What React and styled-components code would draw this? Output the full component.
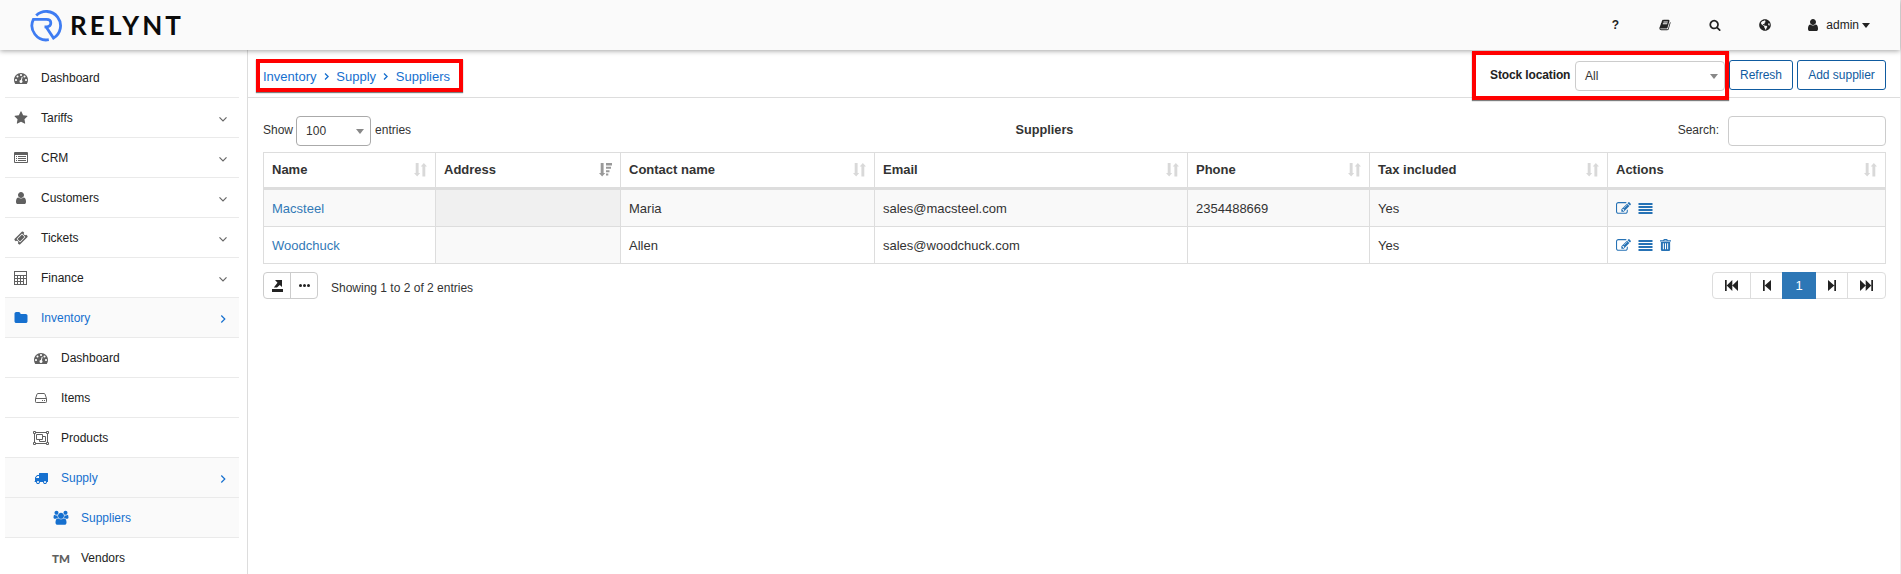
import React from "react";
import styled, { createGlobalStyle } from "styled-components";
import { FaGlobeAmericas } from "react-icons/fa";

const GlobalStyle = createGlobalStyle`
  * { box-sizing: border-box; }
  body {
    margin: 0;
    background: #fff;
    color: #333;
    font: 12px/17px "Liberation Sans", Arial, sans-serif;
    overflow: hidden;
  }
`;

const BLUE = "#1670cf";

const paths = {
  gauge: "M384 1152q0-53-37.5-90.5t-90.5-37.5-90.5 37.5-37.5 90.5 37.5 90.5 90.5 37.5 90.5-37.5 37.5-90.5zm192-448q0-53-37.5-90.5t-90.5-37.5-90.5 37.5-37.5 90.5 37.5 90.5 90.5 37.5 90.5-37.5 37.5-90.5zm428 481l101-382q6-26-7.5-48.5t-38.5-29.5-48 6.5-30 39.5l-101 382q-60 5-107 43.5t-63 98.5q-20 77 20 146t117 89 146-20 89-117q16-60-6-117t-72-91zm660-33q0-53-37.5-90.5t-90.5-37.5-90.5 37.5-37.5 90.5 37.5 90.5 90.5 37.5 90.5-37.5 37.5-90.5zm-640-640q0-53-37.5-90.5t-90.5-37.5-90.5 37.5-37.5 90.5 37.5 90.5 90.5 37.5 90.5-37.5 37.5-90.5zm448 192q0-53-37.5-90.5t-90.5-37.5-90.5 37.5-37.5 90.5 37.5 90.5 90.5 37.5 90.5-37.5 37.5-90.5zm320 448q0 261-141 483-19 29-54 29h-1402q-35 0-54-29-141-221-141-483 0-182 71-348t191-286 286-191 348-71 348 71 286 191 191 286 71 348z",
  star: "M1728 647q0 22-26 48l-363 354 86 500q1 7 1 20 0 21-10.5 35.5t-30.5 14.5q-19 0-40-12l-449-236-449 236q-22 12-40 12-21 0-31.5-14.5t-10.5-35.5q0-6 2-20l86-500-364-354q-25-27-25-48 0-37 56-46l502-73 225-455q19-41 49-41t49 41l225 455 502 73q56 9 56 46z",
  user: "M1536 1399q0 109-62.5 187t-150.5 78h-854q-88 0-150.5-78t-62.5-187q0-85 8.5-160.5t31.5-152 58.5-131 94-89 134.5-34.5q131 128 313 128t313-128q76 0 134.5 34.5t94 89 58.5 131 31.5 152 8.5 160.5zm-256-887q0 159-112.5 271.5t-271.5 112.5-271.5-112.5-112.5-271.5 112.5-271.5 271.5-112.5 271.5 112.5 112.5 271.5z",
  ticket: "M1024 452l316 316-572 572-316-316zm-211 979l618-618q19-19 19-45t-19-45l-362-362q-18-18-45-18t-45 18l-618 618q-19 19-19 45t19 45l362 362q18 18 45 18t45-18zm889-637l-907 908q-37 37-90.5 37t-90.5-37l-126-126q56-56 56-136t-56-136-136-56-136 56l-125-126q-37-37-37-90.5t37-90.5l907-906q37-37 90.5-37t90.5 37l125 125q-56 56-56 136t56 136 136 56 136-56l126 125q37 37 37 90.5t-37 90.5z",
  folder: "M1728 608v704q0 92-66 158t-158 66h-1216q-92 0-158-66t-66-158v-960q0-92 66-158t158-66h320q92 0 158 66t66 158v32h672q92 0 158 66t66 158z",
  truck: "M640 1408q0-52-38-90t-90-38-90 38-38 90 38 90 90 38 90-38 38-90zm-384-512h384v-256h-158q-13 0-22 9l-195 195q-9 9-9 22v30zm1280 512q0-52-38-90t-90-38-90 38-38 90 38 90 90 38 90-38 38-90zm256-1088v1024q0 15-4 26.5t-13.5 18.5-16.5 11.5-23.5 6-22.5 2-25.5 0-22.5-.5q0 106-75 181t-181 75-181-75-75-181h-384q0 106-75 181t-181 75-181-75-75-181h-64q-3 0-22.5.5t-25.5 0-22.5-2-23.5-6-16.5-11.5-13.5-18.5-4-26.5q0-26 19-45t45-19v-320q0-8-.5-35t0-38 2.5-34.5 6.5-37 14-30.5 22.5-30l198-198q19-19 50.5-32t58.5-13h160v-192q0-26 19-45t45-19h1024q26 0 45 19t19 45z",
  users: "M657 896q-162 5-265 128h-134q-82 0-138-40.5t-56-118.5q0-353 124-353 6 0 43.5 21t97.5 42.5 119 21.5q67 0 133-23-5 37-5 66 0 139 81 256zm1071 637q0 120-73 189.5t-194 69.5h-874q-121 0-194-69.5t-73-189.5q0-53 3.5-103.5t14-109 26.5-108.5 43-97.5 62-81 85.5-53.5 111.5-20q10 0 43 21.5t73 48 107 48 135 21.5 135-21.5 107-48 73-48 43-21.5q61 0 111.5 20t85.5 53.5 62 81 43 97.5 26.5 108.5 14 109 3.5 103.5zm-1024-1277q0 106-75 181t-181 75-181-75-75-181 75-181 181-75 181 75 75 181zm704 384q0 159-112.5 271.5t-271.5 112.5-271.5-112.5-112.5-271.5 112.5-271.5 271.5-112.5 271.5 112.5 112.5 271.5zm576 225q0 78-56 118.5t-138 40.5h-134q-103-123-265-128 81-117 81-256 0-29-5-66 66 23 133 23 59 0 119-21.5t97.5-42.5 43.5-21q124 0 124 353zm-128-609q0 106-75 181t-181 75-181-75-75-181 75-181 181-75 181 75 75 181z",
  search: "M1216 832q0-185-131.5-316.5t-316.5-131.5-316.5 131.5-131.5 316.5 131.5 316.5 316.5 131.5 316.5-131.5 131.5-316.5zm512 832q0 52-38 90t-90 38q-54 0-90-38l-343-342q-179 124-399 124-143 0-273.5-55.5t-225-150-150-225-55.5-273.5 55.5-273.5 150-225 225-150 273.5-55.5 273.5 55.5 225 150 150 225 55.5 273.5q0 220-124 399l343 343q37 37 37 90z",
  book: "M1703 478q40 57 18 129l-275 906q-19 64-76.5 107.5t-122.5 43.5h-923q-77 0-148.5-53.5t-99.5-131.5q-24-67-2-127 0-4 3-27t4-37q1-8-3-21.5t-3-19.5q2-11 8-21t16.5-23.5 16.5-23.5q23-38 45-91.5t30-91.5q3-10 .5-30t-.5-28q3-11 17-28t17-23q21-36 42-92t25-90q1-9-2.5-32t.5-28q4-13 22-30.5t22-22.5q19-26 42.5-84.5t27.5-96.5q1-8-3-25.5t-2-26.5q2-8 9-18t18-23 17-21q8-12 16.5-30.5t15-35 16-36 19.5-32 26.5-23.5 36-11.5 47.5 5.5l-1 3q38-9 51-9h761q74 0 114 56t18 130l-274 906q-36 119-71.5 153.5t-128.5 34.5h-869q-27 0-38 15-11 16-1 43 24 70 144 70h923q29 0 56-15.5t35-41.5l300-987q7-22 5-57 38 15 59 43zm-1064 2q-4 13 2 22.5t20 9.5h608q13 0 25.5-9.5t16.5-22.5l21-64q4-13-2-22.5t-20-9.5h-608q-13 0-25.5 9.5t-16.5 22.5zm-83 256q-4 13 2 22.5t20 9.5h608q13 0 25.5-9.5t16.5-22.5l21-64q4-13-2-22.5t-20-9.5h-608q-13 0-25.5 9.5t-16.5 22.5z",
  edit: "M888 1184l116-116-152-152-116 116v56h96v96h56zm440-720q-16-16-33 1l-350 350q-17 17-1 33t33-1l350-350q17-17 1-33zm80 594v190q0 119-84.5 203.5t-203.5 84.5h-832q-119 0-203.5-84.5t-84.5-203.5v-832q0-119 84.5-203.5t203.5-84.5h832q63 0 117 25 15 7 18 23 3 17-9 29l-49 49q-14 14-32 8-23-6-45-6h-832q-66 0-113 47t-47 113v832q0 66 47 113t113 47h832q66 0 113-47t47-113v-126q0-13 9-22l64-64q15-15 35-7t20 29zm-96-738l288 288-672 672h-288v-288zm444 132l-92 92-288-288 92-92q28-28 68-28t68 28l152 152q28 28 28 68t-28 68z",
};

const Glyph = ({ name, size = 14, box = "0 0 1792 1792" }) => (
  <svg width={size} height={size} viewBox={box} fill="currentColor">
    <path d={paths[name]} />
  </svg>
);

const ListAltIcon = () => (
  <svg width="14" height="12" viewBox="0 0 14 12" fill="currentColor">
    <path fillRule="evenodd" d="M1 0h12a1 1 0 0 1 1 1v9a1 1 0 0 1-1 1H1a1 1 0 0 1-1-1V1a1 1 0 0 1 1-1zM1 3v7h12V3z" />
    <path d="M2 4h1v1H2zM4 4h8v1H4zM2 6h1v1H2zM4 6h8v1H4zM2 8h1v1H2zM4 8h8v1H4z" />
  </svg>
);
const CalculatorIcon = () => (
  <svg width="14" height="14" viewBox="0 0 14 14" fill="currentColor">
    <path fillRule="evenodd" d="M0 0h13v14H0zM1 1v3h11V1zM1 5v2h2V5zM4 5v2h2V5zM7 5v2h2V5zM10 5v2h2V5zM1 8v2h2V8zM4 8v2h2V8zM7 8v2h2V8zM10 8v5h2V8zM1 11v2h2v-2zM4 11v2h2v-2zM7 11v2h2v-2z" />
  </svg>
);
const DriveIcon = () => (
  <svg width="12" height="10" viewBox="0 0 12 10" fill="none" stroke="currentColor">
    <path d="M.5 5.500L2 1.200Q2.200 .5 3 .5h6q.8 0 1 .7l1.500 4.300v3.200q0 .8-.8.8H1.300q-.8 0-.8-.8zM.5 5.500h11M7 7.500h1M9 7.500h1" />
  </svg>
);
const GroupIcon = () => (
  <svg width="16" height="14" viewBox="0 0 16 14" fill="none" stroke="currentColor">
    <path d="M2 1.500h12M2 12.500h12M1.500 2v10M14.500 2v10" />
    <path d="M.5.5h2v2h-2zM13.500.5h2v2h-2zM.5 11.500h2v2h-2zM13.500 11.500h2v2h-2z" fill="#fff" />
    <path d="M3.500 3.500h6v5h-6zM9.500 5.500h3v5h-6v-2" />
  </svg>
);
const TrashIcon = () => (
  <svg width="11" height="12" viewBox="0 0 10 12" fill="currentColor" preserveAspectRatio="none">
    <path fillRule="evenodd" d="M3 1.200Q3 0 4 0h2q1 0 1 1.200h3v1.300H0V1.200zM4 .9v.5h2V.9zM.8 3h8.400v7.800Q9.200 12 8 12H2Q.8 12 .8 10.800zM2.600 4.300v5.900h.9V4.300zM4.550 4.300v5.900h.9V4.300zM6.500 4.300v5.900h.9V4.300z" />
  </svg>
);
const LinesIcon = () => (
  <svg width="15" height="11" viewBox="0 0 15 11" fill="currentColor">
    <path d="M.5 0h14v2H.5zM.5 3h14v2H.5zM.5 6h14v2H.5zM.5 9h14v2H.5z" />
  </svg>
);
const Angle = ({ right, size = 8, weight = 1.2 }) => (
  <svg width={size} height={size} viewBox="0 0 8 8" fill="none" stroke="currentColor" strokeWidth={weight}>
    <path d={right ? "M2.300 .5L5.800 4 2.300 7.500" : "M.5 2.300L4 5.800 7.500 2.300"} />
  </svg>
);
const SortIcon = ({ active }) => (
  <svg width="13" height="14" viewBox="0 0 13 14" fill="currentColor">
    <path d="M1.700 0h2.900v10H6.200L3.150 13.500 0 10h1.700z" />
    {active ? (
      <path d="M7 0h6v2.500H7zM7 3.800h5v2H7zM7 7.200h3.500v2H7zM7 10.600h2.300v2H7z" />
    ) : (
      <path d="M8.400 13.500h2.900V3.500H13L9.850 0 6.700 3.500h1.700z" />
    )}
  </svg>
);
const StepIcon = ({ double, forward }) => (
  <svg width={double ? 13 : 8} height="11" viewBox={double ? "0 0 13 11" : "0 0 8 11"} fill="currentColor">
    <g transform={forward ? `translate(${double ? 13 : 8} 0) scale(-1 1)` : undefined}>
      <path d={double ? "M0 0h1.700v11H0zM7.300 0v11L1.700 5.500zM13 0v11L7.300 5.500z" : "M0 0h1.700v11H0zM8 0v11L1.700 5.500z"} />
    </g>
  </svg>
);
const ExportIcon = () => (
  <svg width="11" height="12" viewBox="0 0 11 12" fill="currentColor">
    <path d="M0 9h11v3H0zM3 0h7v7L7.800 5 5 7.600H1.800L5.500 2.700z" />
  </svg>
);
const LogoMark = () => (
  <svg width="33" height="33" viewBox="0 0 33 33" fill="none" stroke="#3e7cf2" strokeWidth="2.800">
    <path d="M6.200 6.600A14.300 14.300 0 1 1 23.500 29.100L16.200 18" />
    <path d="M18.800 30.700A14.300 14.300 0 0 1 3.400 10.400H16.500Q20.800 10.400 20.800 14T16.500 17.800H14.500" />
  </svg>
);

const Page = styled.div`
  width: 1901px;
  height: 574px;
  border-right: 1px solid #eee;
  display: flex;
  flex-direction: column;
`;
const Header = styled.header`
  position: relative;
  z-index: 1;
  flex: none;
  height: 50px;
  padding: 0 30px;
  display: flex;
  align-items: center;
  justify-content: space-between;
  background: #fafafa;
  box-shadow: 0 1px 5px rgba(0, 0, 0, 0.36);
  color: #222;
`;
const Brand = styled.div`
  display: flex;
  align-items: center;
  gap: 7px;
  color: #0b0b0b;
  font: 700 26px/30px Lato, sans-serif;
  letter-spacing: 3.150px;
`;
const HeaderTools = styled.nav`
  display: flex;
  align-items: center;
`;
const Tool = styled.span`
  width: 50px;
  height: 20px;
  display: flex;
  align-items: center;
  justify-content: center;
  font-weight: bold;
`;
const Account = styled.div`
  display: flex;
  align-items: center;
  margin-left: 16px;
`;
const AccountName = styled.span`
  margin: 0 3px 0 6px;
`;
const Caret = styled.i`
  border: solid transparent;
  border-width: ${(p) => (p.$small ? "5px 4px 0" : "5px 4.5px 0")};
  border-top-color: ${(p) => (p.$small ? "#888" : "currentColor")};
`;

const Body = styled.div`
  flex: 1;
  min-height: 0;
  display: flex;
`;
const Sidebar = styled.aside`
  flex: none;
  width: 248px;
  padding: 8px 8px 0 5px;
  border-right: 1px solid #ddd;
  overflow: hidden;
`;
const MenuItem = styled.div`
  height: 40px;
  padding: 0 12px 0 ${(p) => 6 + p.$level * 20}px;
  display: flex;
  align-items: center;
  border-bottom: 1px solid #eaeaea;
  background: ${(p) => (p.$active ? "#fafafa" : "#fff")};
  color: ${(p) => (p.$active ? BLUE : "#222")};
`;
const MenuIcon = styled.span`
  width: 20px;
  height: 18px;
  margin: 1px 10px 0 0;
  display: flex;
  align-items: center;
  justify-content: center;
  color: ${(p) => (p.$active ? BLUE : "#606060")};
`;
const MenuLabel = styled.span`
  flex: 1;
  padding-top: 2px;
`;
const MenuArrow = styled.span`
  display: flex;
  margin-top: 2px;
  color: ${(p) => (p.$active ? BLUE : "#666")};
`;
const Trademark = styled.span`
  padding-top: 1px;
  font: 900 11.500px/12px Lato, sans-serif;
`;

const Main = styled.main`
  flex: 1;
  min-width: 0;
`;
const TitleBar = styled.div`
  height: 48px;
  padding: 0 14px 0 8px;
  display: flex;
  align-items: flex-start;
  justify-content: space-between;
  border-bottom: 1px solid #ddd;
`;
const Highlight = styled.div`
  border: 4px solid #f00;
  box-shadow: 0 1px 1px rgba(0, 0, 0, 0.5);
  display: flex;
  align-items: center;
`;
const Breadcrumbs = styled(Highlight)`
  width: 207px;
  height: 33px;
  margin-top: 9px;
  padding: 1px 0 0 3px;
  gap: 6.400px;
  font-size: 13px;
  color: ${BLUE};
`;
const StockFilter = styled(Highlight)`
  position: relative;
  z-index: 2;
  width: 257px;
  height: 49px;
  margin-top: 1px;
  padding-left: 14px;
`;
const StockLabel = styled.b`
  width: 85px;
  white-space: nowrap;
  letter-spacing: -0.12px;
  color: #222;
`;
const TitleActions = styled.div`
  display: flex;
`;
const Buttons = styled.div`
  display: flex;
  gap: 4px;
  padding-top: 10px;
`;
const Button = styled.button`
  width: ${(p) => p.$width}px;
  height: 30px;
  padding: 0;
  border: 1px solid #0f5ba0;
  border-radius: 3px;
  background: #fff;
  color: #0f5ba0;
  font: inherit;
`;
const Select = styled.div`
  width: ${(p) => p.$width}px;
  height: 30px;
  padding: 1px ${(p) => p.$right}px 0 9px;
  display: flex;
  align-items: center;
  justify-content: space-between;
  border: 1px solid ${(p) => (p.$dark ? "#aaa" : "#ccc")};
  border-radius: 4px;
  background: #fff;
`;

const Content = styled.section`
  padding: 18px 14px 0 15px;
`;
const Controls = styled.div`
  height: 30px;
  display: grid;
  grid-template-columns: 1fr auto 1fr;
  margin-bottom: 6px;
`;
const Length = styled.div`
  display: flex;
  gap: 3px;
  line-height: 29px;
`;
const Entries = styled.span`
  padding-left: 1px;
`;
const Caption = styled.b`
  color: #333;
  font-size: 12.700px;
  line-height: 29px;
  padding-right: 60px;
`;
const Search = styled.label`
  display: flex;
  justify-content: flex-end;
  gap: 9px;
  line-height: 29px;
`;
const SearchInput = styled.input`
  width: 158px;
  height: 30px;
  border: 1px solid #ccc;
  border-radius: 4px;
`;

const Table = styled.div`
  border: solid #ddd;
  border-width: 1px 0 0 1px;
  font-size: 13px;
`;
const Row = styled.div`
  display: grid;
  grid-template-columns: 172px 185px 254px 313px 182px 238px 278px;
  height: 37px;
  border-bottom: ${(p) => (p.$head ? 3 : 1)}px solid #ddd;
  background: ${(p) => (p.$odd ? "#f9f9f9" : "#fff")};
`;
const Cell = styled.div`
  padding: 0 8px;
  display: flex;
  align-items: center;
  border-right: 1px solid #ddd;
  background: ${(p) => (p.$sorted ? (p.$odd ? "#f0f0f0" : "#f9f9f9") : "transparent")};
`;
const HeadCell = styled(Cell)`
  justify-content: space-between;
  padding-bottom: 2px;
  font-weight: bold;
`;
const SortMark = styled.span`
  display: flex;
  padding-top: 2px;
  color: ${(p) => (p.$active ? "#999" : "#d9d9d9")};
`;
const Link = styled.span`
  color: #337ab7;
`;
const RowActions = styled.div`
  display: flex;
  align-items: center;
  gap: 7px;
  color: #2672b5;
`;

const Footer = styled.div`
  margin-top: 8px;
  display: flex;
`;
const Group = styled.div`
  display: flex;
  height: 27px;
  border: 1px solid ${(p) => (p.$light ? "#ddd" : "#ccc")};
  border-radius: 4px;
`;
const GroupButton = styled.div`
  width: ${(p) => p.$width}px;
  display: flex;
  align-items: center;
  justify-content: center;
  border-left: ${(p) => (p.$line ? `1px solid ${p.$line}` : 0)};
  color: #222;
`;
const CurrentPage = styled.div`
  width: 34px;
  margin: -1px 0;
  display: flex;
  align-items: center;
  justify-content: center;
  background: #2d77b6;
  color: #fff;
  font-size: 13px;
`;
const Info = styled.span`
  flex: 1;
  padding: 8px 0 0 13px;
`;
const Dots = styled.span`
  display: flex;
  gap: 1px;
  i { width: 3px; height: 3px; border-radius: 1.500px; background: #222; }
`;

const menu = [
  ["Dashboard", 0, <Glyph name="gauge" />],
  ["Tariffs", 0, <Glyph name="star" />, "down"],
  ["CRM", 0, <ListAltIcon />, "down"],
  ["Customers", 0, <Glyph name="user" />, "down"],
  ["Tickets", 0, <Glyph name="ticket" />, "down"],
  ["Finance", 0, <CalculatorIcon />, "down"],
  ["Inventory", 0, <Glyph name="folder" />, "right", true],
  ["Dashboard", 1, <Glyph name="gauge" />],
  ["Items", 1, <DriveIcon />],
  ["Products", 1, <GroupIcon />],
  ["Supply", 1, <Glyph name="truck" />, "right", true],
  ["Suppliers", 2, <Glyph name="users" size={16} box="0 -100 2048 2048" />, null, true],
  ["Vendors", 2, <Trademark>TM</Trademark>],
];
const columns = ["Name", "Address", "Contact name", "Email", "Phone", "Tax included", "Actions"];
const suppliers = [
  { name: "Macsteel", contact: "Maria", email: "sales@macsteel.com", phone: "2354488669", tax: "Yes" },
  { name: "Woodchuck", contact: "Allen", email: "sales@woodchuck.com", phone: "", tax: "Yes", removable: true },
];

export default function App() {
  return (
    <Page>
      <GlobalStyle />
      <Header>
        <Brand><LogoMark />RELYNT</Brand>
        <HeaderTools>
          <Tool>?</Tool>
          <Tool><Glyph name="book" size={12} /></Tool>
          <Tool><Glyph name="search" size={12} /></Tool>
          <Tool><FaGlobeAmericas size={12} /></Tool>
          <Account>
            <Glyph name="user" />
            <AccountName>admin</AccountName>
            <Caret />
          </Account>
        </HeaderTools>
      </Header>
      <Body>
        <Sidebar>
          {menu.map(([label, level, icon, arrow, active], i) => (
            <MenuItem key={i} $level={level} $active={active}>
              <MenuIcon $active={active}>{icon}</MenuIcon>
              <MenuLabel>{label}</MenuLabel>
              {arrow && <MenuArrow $active={active}><Angle right={arrow === "right"} /></MenuArrow>}
            </MenuItem>
          ))}
        </Sidebar>
        <Main>
          <TitleBar>
            <Breadcrumbs>
              <span>Inventory</span>
              <Angle right size={7} weight={1.5} />
              <span>Supply</span>
              <Angle right size={7} weight={1.5} />
              <span>Suppliers</span>
            </Breadcrumbs>
            <TitleActions>
              <StockFilter>
                <StockLabel>Stock location</StockLabel>
                <Select $width={150} $right={6}>All<Caret $small /></Select>
              </StockFilter>
              <Buttons>
                <Button $width={64}>Refresh</Button>
                <Button $width={89}>Add supplier</Button>
              </Buttons>
            </TitleActions>
          </TitleBar>
          <Content>
            <Controls>
              <Length>
                Show
                <Select $width={75} $right={6} $dark>100<Caret $small /></Select>
                <Entries>entries</Entries>
              </Length>
              <Caption>Suppliers</Caption>
              <Search>Search:<SearchInput /></Search>
            </Controls>
            <Table>
              <Row $head>
                {columns.map((title, i) => (
                  <HeadCell key={title}>
                    {title}
                    <SortMark $active={i === 1}><SortIcon active={i === 1} /></SortMark>
                  </HeadCell>
                ))}
              </Row>
              {suppliers.map((s, i) => (
                <Row key={s.name} $odd={i === 0}>
                  <Cell><Link>{s.name}</Link></Cell>
                  <Cell $sorted $odd={i === 0} />
                  <Cell>{s.contact}</Cell>
                  <Cell>{s.email}</Cell>
                  <Cell>{s.phone}</Cell>
                  <Cell>{s.tax}</Cell>
                  <Cell>
                    <RowActions>
                      <Glyph name="edit" size={15} />
                      <LinesIcon />
                      {s.removable && <TrashIcon />}
                    </RowActions>
                  </Cell>
                </Row>
              ))}
            </Table>
            <Footer>
              <Group>
                <GroupButton $width={26}><ExportIcon /></GroupButton>
                <GroupButton $width={27} $line="#ccc"><Dots><i /><i /><i /></Dots></GroupButton>
              </Group>
              <Info>Showing 1 to 2 of 2 entries</Info>
              <Group $light>
                <GroupButton $width={37}><StepIcon double /></GroupButton>
                <GroupButton $width={32} $line="#ddd"><StepIcon /></GroupButton>
                <CurrentPage>1</CurrentPage>
                <GroupButton $width={31}><StepIcon forward /></GroupButton>
                <GroupButton $width={38} $line="#ddd"><StepIcon double forward /></GroupButton>
              </Group>
            </Footer>
          </Content>
        </Main>
      </Body>
    </Page>
  );
}
